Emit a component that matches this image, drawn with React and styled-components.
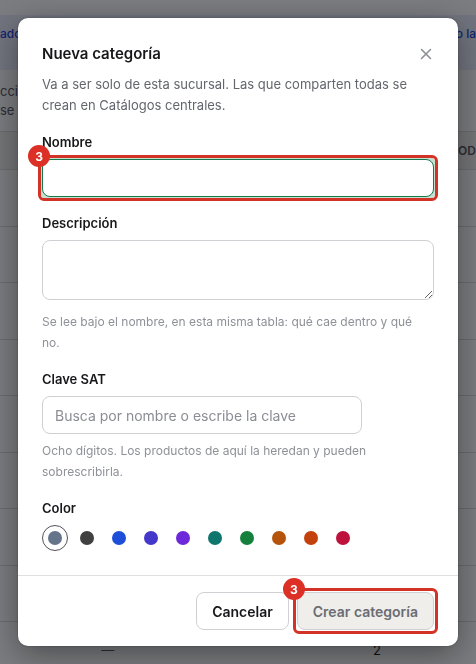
import React, { useState } from 'react';
import styled, { createGlobalStyle, css } from 'styled-components';
import { X } from 'lucide-react';

const COLORS = [
    { name: 'Pizarra', value: '#64748b' },
    { name: 'Grafito', value: '#404040' },
    { name: 'Azul', value: '#1d4ed8' },
    { name: 'Índigo', value: '#4338ca' },
    { name: 'Violeta', value: '#6d28d9' },
    { name: 'Turquesa', value: '#0f766e' },
    { name: 'Verde', value: '#15803d' },
    { name: 'Ámbar', value: '#b45309' },
    { name: 'Naranja', value: '#c2410c' },
    { name: 'Rosa', value: '#be123c' },
];

const EMPTY_ROWS = [1, 2, 3, 4, 5, 6, 7, 8];

const App = () => {

    const [name, setName] = useState('');
    const [color, setColor] = useState(COLORS[0].value);

    return (
        <>
            <GlobalStyle />
            <CatalogPage />
            <Overlay>
                <Dialog role="dialog" aria-modal="true" aria-labelledby="dialog-title">
                    <Body>
                        <Header>
                            <h2 id="dialog-title">Nueva categoría</h2>
                            <CloseButton type="button" aria-label="Cerrar">
                                <X size={18} strokeWidth={2} />
                            </CloseButton>
                        </Header>
                        <Intro>
                            Va a ser solo de esta sucursal. Las que comparten todas se crean en Catálogos centrales.
                        </Intro>
                        <Field>
                            <Label htmlFor="name">Nombre</Label>
                            <Marked>
                                <Input
                                    id="name"
                                    $active
                                    value={name}
                                    onChange={(e) => setName(e.target.value)}
                                />
                                <Marker>3</Marker>
                            </Marked>
                        </Field>
                        <Field>
                            <Label htmlFor="description">Descripción</Label>
                            <Textarea id="description" />
                            <Hint>Se lee bajo el nombre, en esta misma tabla: qué cae dentro y qué no.</Hint>
                        </Field>
                        <Field>
                            <Label htmlFor="sat">Clave SAT</Label>
                            <Input id="sat" $narrow placeholder="Busca por nombre o escribe la clave" />
                            <Hint>Ocho dígitos. Los productos de aquí la heredan y pueden sobrescribirla.</Hint>
                        </Field>
                        <Field role="radiogroup" aria-labelledby="color-label">
                            <Label as="span" id="color-label">Color</Label>
                            <Swatches>
                                {COLORS.map((c) => (
                                    <Swatch
                                        key={c.value}
                                        type="radio"
                                        name="color"
                                        aria-label={c.name}
                                        $color={c.value}
                                        checked={color === c.value}
                                        onChange={() => setColor(c.value)}
                                    />
                                ))}
                            </Swatches>
                        </Field>
                    </Body>
                    <Footer>
                        <Button type="button">Cancelar</Button>
                        <Marked>
                            <Button type="submit" disabled={!name}>Crear categoría</Button>
                            <Marker>3</Marker>
                        </Marked>
                    </Footer>
                </Dialog>
            </Overlay>
        </>
    );
};

const CatalogPage = () => (
    <Page aria-hidden="true">
        <Banner>
            <span>ado</span>
            <span>o la</span>
        </Banner>
        <Summary>
            <p>cci</p>
            <p>se</p>
        </Summary>
        <Table>
            <thead>
                <tr>
                    <th />
                    <th />
                    <th>OD</th>
                </tr>
            </thead>
            <tbody>
                {EMPTY_ROWS.map((row) => (
                    <tr key={row}>
                        <td />
                        <td />
                        <td />
                    </tr>
                ))}
                <tr>
                    <td>—</td>
                    <td>2</td>
                    <td />
                </tr>
            </tbody>
        </Table>
    </Page>
);

const GlobalStyle = createGlobalStyle`
  * {
    box-sizing: border-box;
  }

  body {
    margin: 0;
    background: #edf0f2;
    color: #18181b;
    font-family: Inter, sans-serif;
    font-size: 14px;
    line-height: 21px;
  }

  h2, p {
    margin: 0;
  }

  button, input, textarea {
    font: inherit;
    color: inherit;
  }
`;

const Page = styled.div`
  height: 100vh;
  overflow: hidden;
  padding-top: 15px;
`;

const Banner = styled.div`
  display: flex;
  justify-content: space-between;
  height: 55px;
  padding-top: 8px;
  background: #dae1f0;
  color: #1d3fd0;
  font-size: 12px;
  font-weight: 500;
`;

const Summary = styled.div`
  height: 61px;
  padding-top: 12px;
  color: #52525b;
  font-size: 13px;
  line-height: 19px;
`;

const Table = styled.table`
  width: 100%;
  border-collapse: collapse;
  table-layout: fixed;

  th, td {
    height: 57px;
    padding: 0;
    border-top: 1px solid #cdced2;
    font-size: 13px;
    text-align: right;
  }

  td:first-child {
    color: #52525b;
  }

  th {
    height: 38px;
    background: #e2e3e4;
    color: #52525b;
    font-size: 12px;
    font-weight: 600;
  }

  tbody tr:nth-child(even) td {
    height: 56px;
  }

  th:nth-child(1) {
    width: 24%;
  }

  th:nth-child(3) {
    width: 20%;
  }
`;

const Overlay = styled.div`
  position: fixed;
  inset: 0;
  display: flex;
  align-items: flex-start;
  justify-content: center;
  padding: 18px;
  overflow: auto;
  background: rgba(9, 10, 14, 0.5);
`;

const Dialog = styled.form`
  width: 100%;
  max-width: 440px;
  border-radius: 10px;
  background: #ffffff;
  box-shadow: 0 8px 32px rgba(0, 0, 0, 0.4), 0 0 2px rgba(0, 0, 0, 0.3);
`;

const Body = styled.div`
  display: flex;
  flex-direction: column;
  gap: 16px;
  padding: 24px;
`;

const Header = styled.header`
  display: flex;
  align-items: center;
  justify-content: space-between;
  height: 24px;

  h2 {
    font-size: 15px;
    font-weight: 600;
    line-height: 24px;
  }
`;

const CloseButton = styled.button`
  display: grid;
  place-items: center;
  width: 28px;
  height: 28px;
  margin-right: -6px;
  padding: 0;
  border: 0;
  background: none;
  color: #8b8d94;
  cursor: pointer;
`;

const Intro = styled.p`
  margin-top: -8px;
  color: #63666d;
  font-size: 13px;
`;

const Field = styled.div`
  display: flex;
  flex-direction: column;
  gap: 6px;
`;

const Label = styled.label`
  font-size: 13px;
  font-weight: 600;
`;

const control = css`
  display: block;
  width: 100%;
  border: 1px solid #cfd0d3;
  border-radius: 8px;
  background: #ffffff;
  outline: none;
`;

const Input = styled.input`
  ${control}
  height: 38px;
  padding: 0 12px;
  max-width: ${({ $narrow }) => ($narrow ? '320px' : 'none')};

  &::placeholder {
    color: #8b8d94;
    opacity: 1;
  }

  ${({ $active }) => $active && css`
    border-color: #16794c;
    box-shadow: 0 0 0 3px #c5e0d1;
  `}
`;

const Textarea = styled.textarea`
  ${control}
  height: 60px;
  margin-bottom: 5px;
  padding: 8px 12px;
  resize: vertical;
`;

const Hint = styled.p`
  max-width: 380px;
  color: #8f9198;
  font-size: 12px;
`;

// red frame with a numbered badge on its top left corner
const Marked = styled.div`
  position: relative;

  &::after {
    content: '';
    position: absolute;
    inset: -4px;
    border: 3px solid #d33227;
    border-radius: 6px;
    pointer-events: none;
  }
`;

const Marker = styled.span`
  position: absolute;
  top: -14px;
  left: -14px;
  z-index: 1;
  display: grid;
  place-items: center;
  width: 22px;
  height: 22px;
  border-radius: 50%;
  background: #dc2f25;
  color: #ffffff;
  font-size: 12px;
  font-weight: 700;
`;

const Swatches = styled.div`
  display: flex;
  flex-wrap: wrap;
  gap: 6px;
`;

const Swatch = styled.input`
  appearance: none;
  display: grid;
  place-items: center;
  width: 26px;
  height: 26px;
  margin: 0;
  border: 1px solid transparent;
  border-radius: 50%;
  cursor: pointer;

  &::before {
    content: '';
    width: 14px;
    height: 14px;
    border-radius: 50%;
    background: ${({ $color }) => $color};
  }

  &:checked {
    border-color: #52525b;
  }
`;

const Footer = styled.footer`
  display: flex;
  justify-content: flex-end;
  gap: 8px;
  padding: 16px 24px;
  border-top: 1px solid #dedfe1;
`;

const Button = styled.button`
  height: 38px;
  padding: 0 15px;
  border: 1px solid #cfd0d3;
  border-radius: 8px;
  background: #ffffff;
  font-weight: 600;
  cursor: pointer;

  &:disabled {
    background: #efeeea;
    color: #6b6d73;
    cursor: default;
  }
`;

export default App;
